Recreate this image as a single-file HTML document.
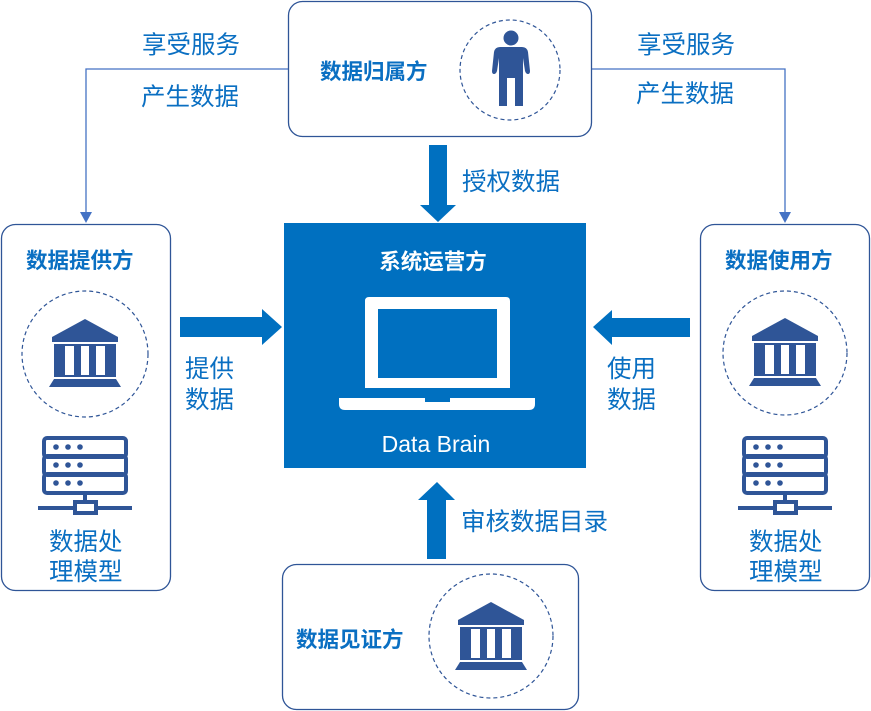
<!DOCTYPE html>
<html><head><meta charset="utf-8"><style>
html,body{margin:0;padding:0;background:#fff;width:871px;height:711px;overflow:hidden}
svg{display:block}
text{font-family:"Liberation Sans","Noto Sans CJK SC",sans-serif}
.t{fill:#0a6fc2;font-size:24.5px}
.b{fill:#0a6fc2;font-size:21.5px;font-weight:bold}
</style></head><body>
<svg width="871" height="711" viewBox="0 0 871 711" xmlns="http://www.w3.org/2000/svg">
<defs>
<g id="bank" fill="#2f5597">
<polygon points="36,0 3,18 3,23 69,23 69,18"/>
<path d="M5,25H67V58H5Z M16,27V56H25V27Z M32,27V56H40V27Z M47,27V56H56V27Z" fill-rule="evenodd"/>
<polygon points="5,60 67,60 72,68 0,68"/>
</g>
<g id="srv" fill="none" stroke="#2f5597" stroke-width="4">
<rect x="2" y="2" width="82" height="19" rx="3"/>
<rect x="2" y="20" width="82" height="19" rx="3"/>
<rect x="2" y="38" width="82" height="19" rx="3"/>
<line x1="43" y1="58" x2="43" y2="66"/>
<rect x="33" y="66" width="21" height="11"/>
<line x1="-4" y1="72" x2="33" y2="72"/>
<line x1="54" y1="72" x2="90" y2="72"/>
<g fill="#2f5597" stroke="none">
<circle cx="14" cy="11" r="2.8"/><circle cx="26" cy="11" r="2.8"/><circle cx="38" cy="11" r="2.8"/>
<circle cx="14" cy="29" r="2.8"/><circle cx="26" cy="29" r="2.8"/><circle cx="38" cy="29" r="2.8"/>
<circle cx="14" cy="47" r="2.8"/><circle cx="26" cy="47" r="2.8"/><circle cx="38" cy="47" r="2.8"/>
</g>
</g>
</defs>

<g stroke="#4472c4" stroke-width="1.3" fill="none">
<polyline points="288,69 86,69 86,213"/>
<polyline points="591,69 785,69 785,213"/>
</g>
<polygon points="80,212 92,212 86,223" fill="#4472c4"/>
<polygon points="779,212 791,212 785,223" fill="#4472c4"/>

<g fill="#fff" stroke="#2f5597" stroke-width="1.3">
<rect x="288.5" y="1.5" width="303" height="135" rx="14"/>
<rect x="1.5" y="224.5" width="169" height="366" rx="14"/>
<rect x="700.5" y="224.5" width="169" height="366" rx="14"/>
<rect x="282.5" y="564.5" width="296" height="145" rx="14"/>
</g>

<g fill="none" stroke="#2f5597" stroke-width="1.2" stroke-dasharray="4,3">
<circle cx="510" cy="70" r="50"/>
<circle cx="85" cy="354" r="63"/>
<circle cx="785" cy="353" r="62"/>
<circle cx="491" cy="636" r="62"/>
</g>

<g fill="#2f5597">
<circle cx="511" cy="38" r="7.5"/>
<path d="M500,47 H522 Q527,47 528,52 L530,71 Q530,74 528,74 Q526,74 525,71 L523,58 V106 H515 V78 H507 V106 H499 V58 L497,71 Q496,74 494,74 Q492,74 492,71 L494,52 Q495,47 500,47Z"/>
</g>

<use href="#bank" x="49" y="319"/>
<use href="#bank" x="749" y="318"/>
<use href="#bank" x="455" y="602"/>
<use href="#srv" x="42" y="436"/>
<use href="#srv" x="742" y="436"/>

<rect x="284" y="223" width="302" height="245" fill="#0070c0"/>
<text x="433" y="269" text-anchor="middle" fill="#fff" font-size="21.5" font-weight="bold">系统运营方</text>
<path d="M369,297 H506 Q510,297 510,301 V388 H365 V301 Q365,297 369,297Z M378,309 V378 H497 V309Z" fill="#fff" fill-rule="evenodd"/>
<path d="M339,398 H425 V402 H450 V398 H535 V404 Q535,410 529,410 H345 Q339,410 339,404Z" fill="#fff"/>
<text x="436" y="452" text-anchor="middle" fill="#fff" font-size="23">Data Brain</text>

<g fill="#0070c0">
<polygon points="429,145 447,145 447,205 456,205 438,222 420,205 429,205"/>
<polygon points="180,317 262,317 262,309 282,327 262,345 262,337 180,337"/>
<polygon points="690,318 612,318 612,310 593,327 612,345 612,337 690,337"/>
<polygon points="427,559 446,559 446,500 455,500 437,482 418,500 427,500"/>
</g>

<text class="t" x="142" y="53">享受服务</text>
<text class="t" x="141" y="105">产生数据</text>
<text class="t" x="637" y="53">享受服务</text>
<text class="t" x="636" y="102">产生数据</text>
<text class="b" x="320" y="79">数据归属方</text>
<text class="t" x="462" y="190">授权数据</text>
<text class="b" x="26" y="268">数据提供方</text>
<text class="b" x="725" y="268">数据使用方</text>
<text class="t" x="185" y="377">提供</text>
<text class="t" x="185" y="408">数据</text>
<text class="t" x="607" y="377">使用</text>
<text class="t" x="607" y="408">数据</text>
<text class="t" x="49" y="550">数据处</text>
<text class="t" x="49" y="580">理模型</text>
<text class="t" x="749" y="550">数据处</text>
<text class="t" x="749" y="580">理模型</text>
<text class="t" x="461" y="530">审核数据目录</text>
<text class="b" x="296" y="647">数据见证方</text>
</svg>
</body></html>
